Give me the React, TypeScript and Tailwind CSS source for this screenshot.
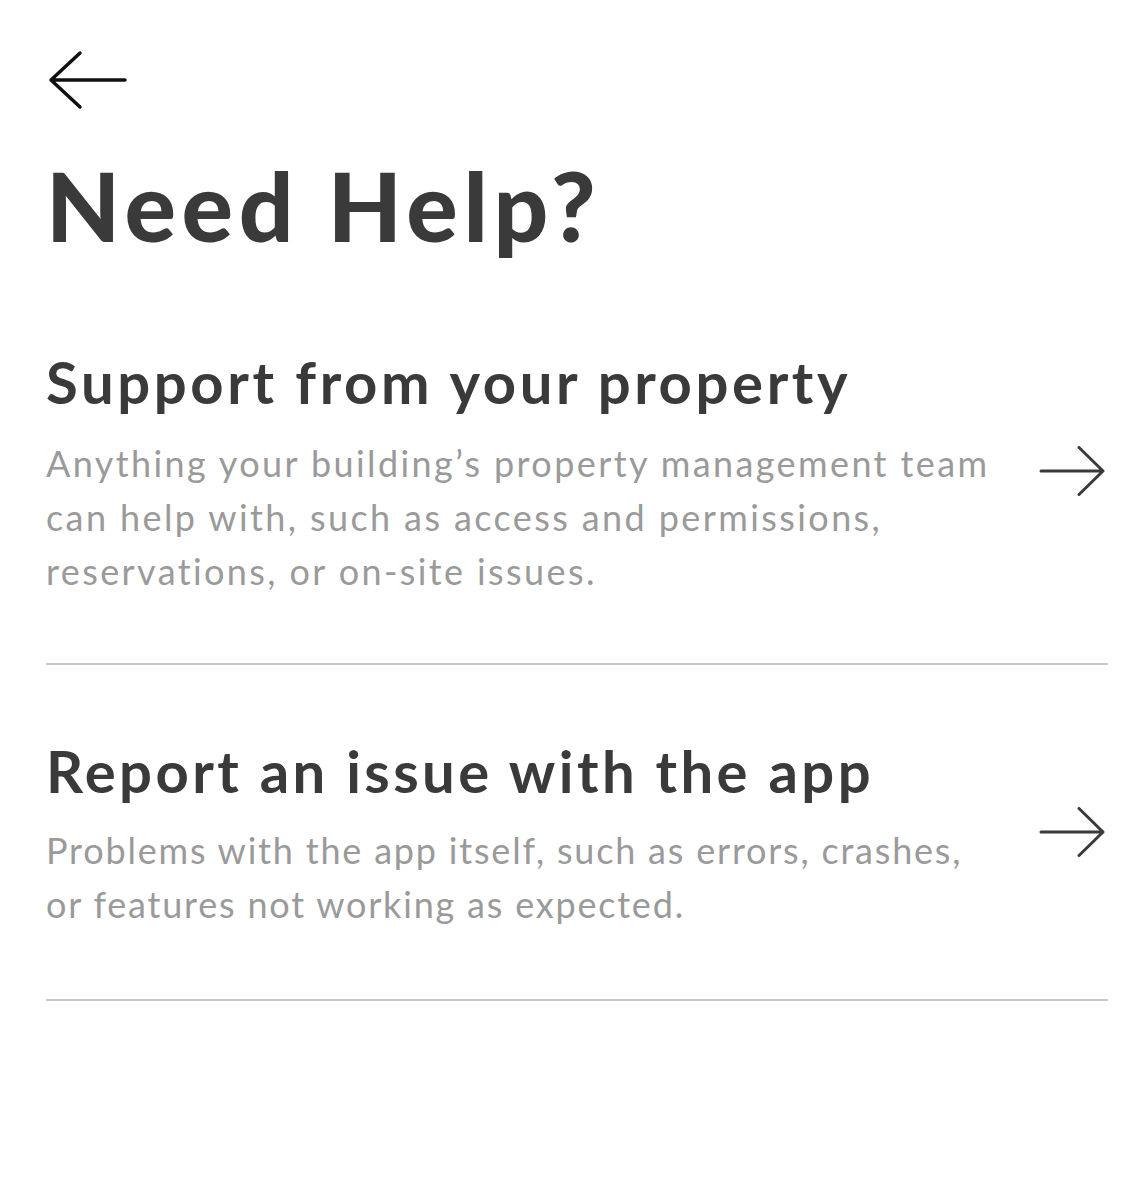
import React from "react";

function BackArrow() {
  return (
    <svg width="80" height="60" viewBox="0 0 80 60" fill="none" className="block">
      <path
        d="M32 3 L3 30 L32 57 M3 30 L77 30"
        stroke="#111111"
        strokeWidth="3.5"
        strokeLinecap="round"
        strokeLinejoin="round"
      />
    </svg>
  );
}

function RightArrow() {
  return (
    <svg width="66" height="50" viewBox="0 0 66 50" fill="none" className="block shrink-0">
      <path
        d="M2 25 L64 25 M40 1.5 L64 25 L40 48.5"
        stroke="#3a3a3a"
        strokeWidth="3"
        strokeLinecap="round"
        strokeLinejoin="round"
      />
    </svg>
  );
}

function Row({
  title,
  lines,
  variant,
}: {
  title: string;
  lines: string[];
  variant: "a" | "b";
}) {
  const a = variant === "a";
  return (
    <div
      className={
        "flex items-center justify-between border-b-2 border-[#c9c9c9] " +
        (a ? "pt-[100px] pb-[65px]" : "pt-[77px] pb-[68px]")
      }
    >
      <div className="flex flex-col">
        <h2
          className={
            "text-[58px] leading-[58px] font-bold text-[#3a3a3a] whitespace-nowrap " +
            (a ? "tracking-[3.6px]" : "tracking-[3.4px]")
          }
        >
          {title}
        </h2>
        <p
          className={
            "text-[36px] leading-[54px] font-normal text-[#9a9a9a] whitespace-nowrap " +
            (a ? "mt-[25px] tracking-[2.4px]" : "mt-[23px] tracking-[1.8px]")
          }
        >
          {lines.map((l, i) => (
            <span key={i} className="block">
              {l}
            </span>
          ))}
        </p>
      </div>
      <div className="mr-[3px] mb-[10px]">
        <RightArrow />
      </div>
    </div>
  );
}

export default function App() {
  return (
    <div
      className="min-h-screen w-full bg-white pl-[46px] pr-[34px]"
      style={{ fontFamily: "Lato, 'Open Sans', sans-serif" }}
    >
      <div className="pt-[50px] ml-[2px]">
        <BackArrow />
      </div>
      <h1 className="mt-[47px] text-[96px] leading-[96px] font-black tracking-[5.7px] text-[#3a3a3a] whitespace-nowrap">
        Need Help?
      </h1>
      <Row
        variant="a"
        title="Support from your property"
        lines={[
          "Anything your building’s property management team",
          "can help with, such as access and permissions,",
          "reservations, or on-site issues.",
        ]}
      />
      <Row
        variant="b"
        title="Report an issue with the app"
        lines={[
          "Problems with the app itself, such as errors, crashes,",
          "or features not working as expected.",
        ]}
      />
    </div>
  );
}
